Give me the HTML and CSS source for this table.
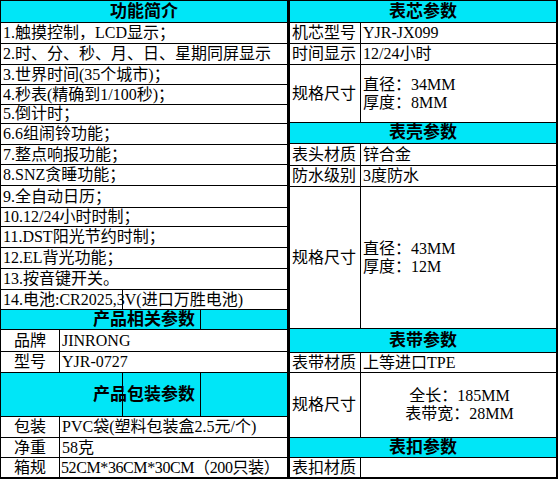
FILE: index.html
```html
<!DOCTYPE html>
<html lang="zh-CN">
<head>
<meta charset="utf-8">
<title>产品参数</title>
<link rel="stylesheet" href="styles.css">
</head>
<body>
<div class="sheet">
  <div class="grid left">
    <div class="hd">功能简介</div>
    <div class="full">1.触摸控制，LCD显示；</div>
    <div class="full">2.时、分、秒、月、日、星期同屏显示</div>
    <div class="full">3.世界时间(35个城市)；</div>
    <div class="full">4.秒表(精确到1/100秒)；</div>
    <div class="full">5.倒计时；</div>
    <div class="full">6.6组闹铃功能；</div>
    <div class="full">7.整点响报功能；</div>
    <div class="full">8.SNZ贪睡功能；</div>
    <div class="full">9.全自动日历；</div>
    <div class="full">10.12/24小时时制；</div>
    <div class="full">11.DST阳光节约时制；</div>
    <div class="full">12.EL背光功能；</div>
    <div class="full">13.按音键开关。</div>
    <div class="full glitch-a">14.电池:CR2025,3V(进口万胜电池)</div>
    <div class="hd glitch-b">产品相关参数</div>
    <div class="lb center">品牌</div>
    <div class="val">JINRONG</div>
    <div class="lb center">型号</div>
    <div class="val">YJR-0727</div>
    <div class="hd glitch-c">产品包装参数</div>
    <div class="lb center">包装</div>
    <div class="val">PVC袋(塑料包装盒2.5元/个)</div>
    <div class="lb center">净重</div>
    <div class="val">58克</div>
    <div class="lb center">箱规</div>
    <div class="val tight">52CM*36CM*30CM（200只装）</div>
  </div>
  <div class="grid right">
    <div class="hd">表芯参数</div>
    <div class="lb">机芯型号</div>
    <div class="val">YJR-JX099</div>
    <div class="lb">时间显示</div>
    <div class="val">12/24小时</div>
    <div class="lb">规格尺寸</div>
    <div class="val multi"><span>直径：34MM</span><span>厚度：8MM</span></div>
    <div class="hd">表壳参数</div>
    <div class="lb">表头材质</div>
    <div class="val">锌合金</div>
    <div class="lb">防水级别</div>
    <div class="val">3度防水</div>
    <div class="lb">规格尺寸</div>
    <div class="val multi"><span>直径：43MM</span><span>厚度：12M</span></div>
    <div class="hd">表带参数</div>
    <div class="lb">表带材质</div>
    <div class="val">上等进口TPE</div>
    <div class="lb">规格尺寸</div>
    <div class="val multi centered"><span>全长：185MM</span><span>表带宽：28MM</span></div>
    <div class="hd">表扣参数</div>
    <div class="lb">表扣材质</div>
    <div class="val"></div>
  </div>
</div>
</body>
</html>
```

FILE: styles.css
```css
html, body {
  margin: 0;
  padding: 0;
  background: #fff;
}

.sheet {
  display: flex;
  width: 558px;
  height: 479px;
  font-family: "Liberation Serif", "Noto Sans CJK SC", serif;
  font-size: 16px;
  color: #000;
}

.grid {
  display: grid;
  gap: 1px;
  background: #000;
  box-sizing: border-box;
}

.left {
  width: 288px;
  padding: 1px 1px 2px 1px;
  grid-template-columns: 58px 227px;
  grid-template-rows: 21px 20px 20px 19px 19px 18px 20px 19px 20px 21px 18px 20px 20px 20px 19px 19px 21px 20px 43px 20px 19px 19px;
}

.right {
  width: 270px;
  padding: 1px 2px 2px 2px;
  grid-template-columns: 70px 195px;
  grid-template-rows: 21px 20px 20px 57px 20px 21px 20px 141px 23px 19px 64px 19px 19px;
}

.grid > div {
  background: #fff;
  display: flex;
  align-items: center;
  line-height: 18px;
  white-space: nowrap;
  overflow: hidden;
}

.hd {
  grid-column: 1 / -1;
  background: #00e6f7 !important;
  justify-content: center;
  font-weight: bold;
  font-size: 17px;
}

.full {
  grid-column: 1 / -1;
  padding-left: 2px;
}

.lb {
  padding-left: 2px;
}

.lb.center {
  justify-content: center;
  padding-left: 0;
}

.val {
  padding-left: 2px;
}

.val.tight {
  padding-left: 1px;
  letter-spacing: -0.4px;
}

.multi {
  flex-direction: column;
  justify-content: center;
  align-items: flex-start !important;
  line-height: 20px;
}

.multi.centered {
  align-items: center !important;
}

.glitch-a {
  background: linear-gradient(to right, transparent 121px, #000 121px, #000 122px, transparent 122px), #fff !important;
}

.glitch-b {
  background: linear-gradient(to right, transparent 199px, #000 199px, #000 200px, transparent 200px), #00e6f7 !important;
}

.glitch-c {
  background: linear-gradient(to right, transparent 121px, #000 121px, #000 122px, transparent 122px, transparent 199px, #000 199px, #000 200px, transparent 200px), #00e6f7 !important;
}
```
